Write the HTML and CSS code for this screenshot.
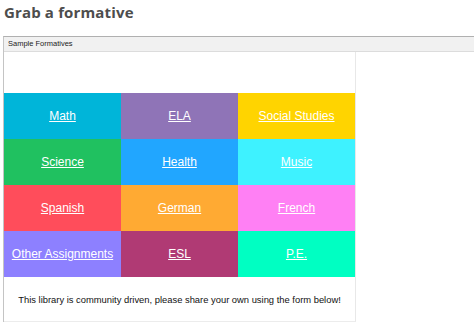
FILE: index.html
```html
<!DOCTYPE html>
<html>
<head>
<meta charset="utf-8">
<link rel="stylesheet" href="styles.css">
</head>
<body>
<h1 class="title">Grab a formative</h1>
<div class="frame">
  <div class="frame-head">Sample Formatives</div>
  <div class="frame-body">
    <div class="grid">
      <div class="cell c-math"><a href="#">Math</a></div>
      <div class="cell c-ela"><a href="#">ELA</a></div>
      <div class="cell c-ss"><a href="#">Social Studies</a></div>
      <div class="cell c-sci"><a href="#">Science</a></div>
      <div class="cell c-health"><a href="#">Health</a></div>
      <div class="cell c-music"><a href="#">Music</a></div>
      <div class="cell c-span"><a href="#">Spanish</a></div>
      <div class="cell c-ger"><a href="#">German</a></div>
      <div class="cell c-fr"><a href="#">French</a></div>
      <div class="cell c-other"><a href="#">Other Assignments</a></div>
      <div class="cell c-esl"><a href="#">ESL</a></div>
      <div class="cell c-pe"><a href="#">P.E.</a></div>
    </div>
    <p class="note">This library is community driven, please share your own using the form below!</p>
  </div>
</div>
</body>
</html>
```
FILE: styles.css
```css
html, body {
  margin: 0;
  padding: 0;
  background: #fff;
}
body {
  font-family: "Liberation Sans", Arial, sans-serif;
}
.title {
  margin: 0;
  height: 36px;
  padding: 2px 0 0 4px;
  box-sizing: border-box;
  font-family: "Open Sans", sans-serif;
  font-weight: 700;
  font-size: 15px;
  letter-spacing: 0.15px;
  line-height: 20px;
  color: #4d4d4d;
}
.frame {
  margin-left: 3px;
  border-top: 1px solid #b0b0b0;
  border-left: 1px solid #c4c4c4;
}
.frame-head {
  height: 14px;
  background: #f1f1f1;
  border-bottom: 1px solid #dcdcdc;
  font-size: 7.5px;
  line-height: 14px;
  padding-left: 4px;
  color: #222;
}
.frame-body {
  width: 351px;
  padding-top: 41px;
  border-right: 1px solid #e8e8e8;
  border-bottom: 1px solid #ececec;
  background: #fff;
}
.grid {
  display: grid;
  grid-template-columns: 117px 117px 117px;
  grid-auto-rows: 46px;
}
.cell {
  display: flex;
  align-items: center;
  justify-content: center;
}
.cell a {
  color: #fff;
  font-size: 12px;
  text-decoration: underline;
}
.c-math { background: #00b5d9; }
.c-ela { background: #8f74b7; }
.c-ss { background: #ffd400; }
.c-sci { background: #20c160; }
.c-health { background: #21a6ff; }
.c-music { background: #3ef2ff; }
.c-span { background: #ff4d5b; }
.c-ger { background: #ffaa33; }
.c-fr { background: #ff80f4; }
.c-other { background: #8d80ff; }
.c-esl { background: #b03a74; }
.c-pe { background: #00ffc2; }
.note {
  margin: 0;
  height: 44px;
  display: flex;
  align-items: center;
  justify-content: center;
  font-size: 9.4px;
  color: #111;
}
```
